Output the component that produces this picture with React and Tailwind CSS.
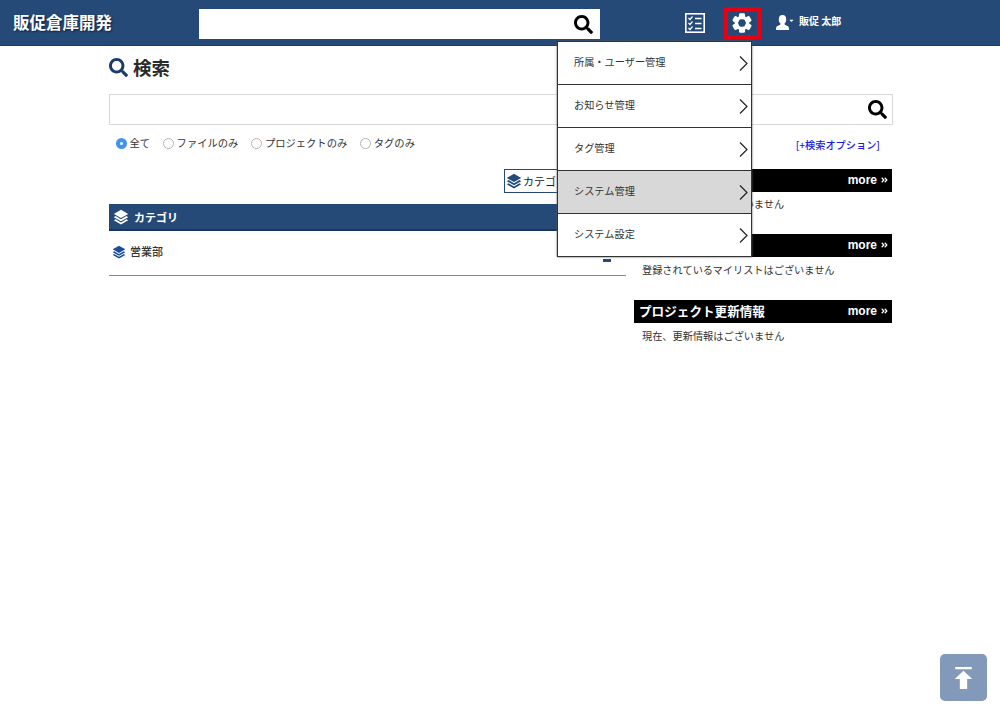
import React from "react";
import { FaSearch, FaCaretDown, FaAngleDoubleRight } from "react-icons/fa";

const jp = "font-['Hiragino_Kaku_Gothic_Pro','Noto_Sans_CJK_JP',sans-serif]";

const menuItems = [
  { label: "所属・ユーザー管理" },
  { label: "お知らせ管理" },
  { label: "タグ管理" },
  { label: "システム管理", active: true },
  { label: "システム設定" },
];

const Layers = ({ className }) => (
  <svg viewBox="0 0 20 20" className={className} fill="currentColor">
    <path d="M10 1 19 6.2 10 11.4 1 6.2Z" />
    <path d="M3.2 8.9 10 12.8 16.8 8.9 19 10.2 10 15.4 1 10.2Z" />
    <path d="M3.2 12.9 10 16.8 16.8 12.9 19 14.2 10 19.4 1 14.2Z" />
  </svg>
);

const Chevron = () => (
  <svg viewBox="0 0 9 15" className="h-[15px] w-[9px]" fill="none" stroke="#222" strokeWidth="1.2">
    <path d="M1 0.5 8 7.5 1 14.5" />
  </svg>
);

const ChecklistIcon = () => (
  <svg viewBox="0 0 20 20" className="h-[20px] w-[20px]" fill="none" stroke="#fff">
    <rect x="0.8" y="0.8" width="18.4" height="18.4" strokeWidth="1.6" />
    <path d="M3.5 5 5 6.5 7.5 3.5M3.5 10 5 11.5 7.5 8.5M3.5 15 5 16.5 7.5 13.5" strokeWidth="1.2" />
    <path d="M10 5.5H16.5M10 10.5H16.5M10 15.5H16.5" strokeWidth="1.5" />
  </svg>
);

const GearIcon = () => (
  <svg viewBox="0 0 20 20" className="h-[20px] w-[20px]" fill="#fff">
    {[0, 60, 120, 180, 240, 300].map((deg) => (
      <rect key={deg} x="7" y="0.2" width="6" height="6" rx="1.4" transform={`rotate(${deg} 10 10)`} />
    ))}
    <circle cx="10" cy="10" r="5.6" fill="none" stroke="#fff" strokeWidth="3.4" />
  </svg>
);

const UserIcon = () => (
  <svg viewBox="0 0 13 15" className="h-[15px] w-[13px]" fill="#fff">
    <ellipse cx="6.5" cy="4.4" rx="3.7" ry="4.4" />
    <path d="M4.6 7.5H8.4L8.8 9.8 12 11.2C12.8 11.6 13 12.6 13 15H0C0 12.6 0.2 11.6 1 11.2L4.2 9.8Z" />
  </svg>
);

const Radio = ({ label, checked }) => (
  <label className="flex items-center gap-[2.5px]">
    {checked ? (
      <span className="flex h-[11px] w-[11px] items-center justify-center rounded-full bg-[#3f93f3]">
        <span className="h-[3px] w-[3px] rounded-full bg-white" />
      </span>
    ) : (
      <span className="h-[11px] w-[11px] rounded-full border border-[#b5b5b5] bg-white" />
    )}
    <span>{label}</span>
  </label>
);

const SidePanel = ({ title, message, className, msgClass = "mt-[6px]" }) => (
  <section className={className}>
    <div className="flex h-[23px] items-center justify-between bg-black pl-[5px] pr-[4px] text-white">
      <h3 className="text-[12.6px] font-bold leading-none">{title}</h3>
      <span className="mb-[1px] flex items-center gap-[4px] font-['Liberation_Sans',sans-serif] text-[12px] font-bold leading-none">
        more
        <FaAngleDoubleRight className="h-[8px] w-[7px]" />
      </span>
    </div>
    <p className={`${msgClass} pl-[8px] text-[10.2px] leading-[14px] text-[#333]`}>{message}</p>
  </section>
);

export default function App() {
  return (
    <div className={`${jp} min-h-[716px] bg-white text-[#333]`}>
      <header className="relative flex h-[46px] items-center border-b border-[#1d3c63] bg-[#264a77] text-white">
        <h1 className="ml-[13px] w-[186px] text-[16.5px] font-bold leading-none [text-shadow:1px_1px_2px_#0b1f3a]">
          販促倉庫開発
        </h1>
        <div className="mt-[3px] flex h-[30px] w-[401px] items-center justify-end bg-white pr-[7px]">
          <FaSearch className="h-[19px] w-[19px] text-black" />
        </div>
        <div className="ml-[85px] flex h-[20px] w-[20px]">
          <ChecklistIcon />
        </div>
        <div className="ml-[19px] flex h-[32px] w-[37px] items-center justify-center border-[4px] border-[#e60012] pr-[1px]">
          <div className="shrink-0">
            <GearIcon />
          </div>
        </div>
        <div className="ml-[15px] mb-[1px] flex items-center">
          <UserIcon />
          <FaCaretDown className="mb-[4px] h-[7px] w-[5px]" />
          <span className="mb-[3px] ml-[5px] text-[10px] font-bold leading-none">販促 太郎</span>
        </div>

        <nav className="absolute left-[557px] top-[41px] z-10 w-[195px] border border-[#333] bg-white shadow-[0_0_2px_#555]">
          {menuItems.map((item, i) => (
            <a
              key={item.label}
              className={`flex items-center justify-between pl-[16px] pr-[3px] text-[10.2px] text-[#333] ${
                i > 0 ? "h-[43px] border-t border-[#333]" : "h-[42px]"
              } ${item.active ? "bg-[#d8d8d8]" : "bg-white"}`}
            >
              <span className="mb-[3px]">{item.label}</span>
              <Chevron />
            </a>
          ))}
        </nav>
      </header>

      <main className="ml-[109px] w-[784px]">
        <div className="flex h-[48px] items-center gap-[5px] pb-[5px]">
          <FaSearch className="h-[19px] w-[19px] text-[#1a3c6c]" />
          <h2 className="text-[18.5px] font-bold leading-none text-[#2a2a2a]">検索</h2>
        </div>
        <div className="flex h-[31px] items-center justify-end border border-[#d8d8d8] pr-[5px]">
          <FaSearch className="h-[19px] w-[19px] text-black" />
        </div>
        <div className="mt-[10px] flex h-[16px] items-center justify-between pl-[7px] pr-[13px] text-[10.3px] text-[#333]">
          <div className="flex items-center gap-[13px]">
            <Radio label="全て" checked />
            <Radio label="ファイルのみ" />
            <Radio label="プロジェクトのみ" />
            <Radio label="タグのみ" />
          </div>
          <a className="mt-[4px] text-[10.2px] font-medium text-[#1a1ae6]">[+検索オプション]</a>
        </div>

        <div className="mt-[18px] flex gap-[8px]">
          <div className="w-[517px]">
            <div className="flex justify-end">
              <button className="flex h-[24px] w-[122px] items-center gap-[1px] border border-[#264a77] pl-[1px] text-[11px] text-[#222]">
                <Layers className="h-[16px] w-[16px] text-[#264a77]" />
                カテゴリ
              </button>
            </div>
            <div className="mt-[11px] flex h-[27px] items-center gap-[5px] border-b-2 border-[#173761] bg-[#264a77] pl-[4px] text-white">
              <Layers className="h-[16px] w-[16px]" />
              <h3 className="mt-[1px] text-[11px] font-bold leading-none">カテゴリ</h3>
            </div>
            <div className="flex h-[45px] items-center justify-between border-b border-[#888] pl-[3px] pr-[15px]">
              <div className="mb-[3px] flex items-center gap-[4px] text-[11px] font-medium">
                <Layers className="h-[14px] w-[14px] text-[#1b4f9c]" />
                営業部
              </div>
              <span className="mt-[14px] h-[3px] w-[8px] bg-[#264a77]" />
            </div>
          </div>

          <aside className="w-[258px]">
            <SidePanel title="新着情報" message="現在、お知らせはございません" msgClass="mt-[5px]" />
            <SidePanel className="mt-[23px]" title="マイリスト" message="登録されているマイリストはございません" />
            <SidePanel className="mt-[23px]" title="プロジェクト更新情報" message="現在、更新情報はございません" />
          </aside>
        </div>
      </main>

      <a className="fixed left-[940px] top-[654px] flex h-[47px] w-[47px] items-center justify-center rounded-[5px] bg-[#8299ba]">
        <svg viewBox="0 0 20 24" className="h-[22px] w-[19px]" fill="#fff">
          <path d="M1 0H19V2.5H1ZM10 4 19.5 13H14V24H6V13H0.5Z" />
        </svg>
      </a>
    </div>
  );
}
